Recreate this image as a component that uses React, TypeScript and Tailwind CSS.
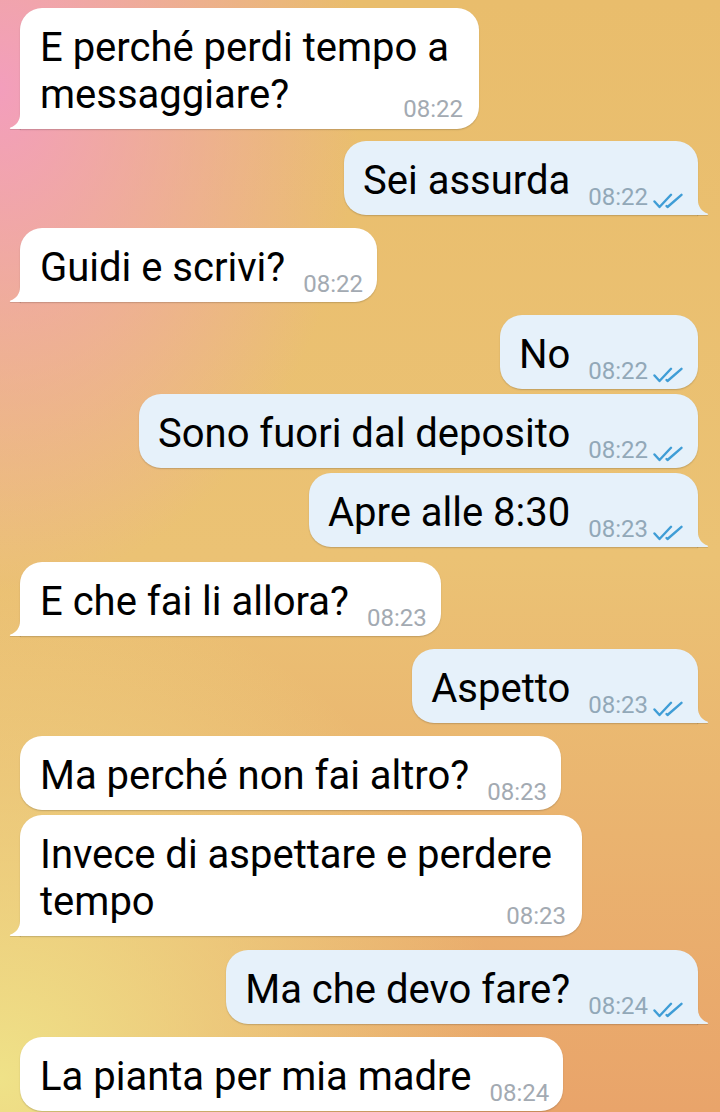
import React from "react";

type Msg = {
  out: boolean;
  lines: string[];
  time: string;
  tail: boolean;
  gap: string;
};

const msgs: Msg[] = [
  { out: false, lines: ["E perché perdi tempo a", "messaggiare?"], time: "08:22", tail: true, gap: "mt-0" },
  { out: true, lines: ["Sei assurda"], time: "08:22", tail: true, gap: "mt-[12px]" },
  { out: false, lines: ["Guidi e scrivi?"], time: "08:22", tail: true, gap: "mt-[13px]" },
  { out: true, lines: ["No"], time: "08:22", tail: false, gap: "mt-[13px]" },
  { out: true, lines: ["Sono fuori dal deposito"], time: "08:22", tail: false, gap: "mt-[5px]" },
  { out: true, lines: ["Apre alle 8:30"], time: "08:23", tail: true, gap: "mt-[5px]" },
  { out: false, lines: ["E che fai li allora?"], time: "08:23", tail: true, gap: "mt-[15px]" },
  { out: true, lines: ["Aspetto"], time: "08:23", tail: true, gap: "mt-[13px]" },
  { out: false, lines: ["Ma perché non fai altro?"], time: "08:23", tail: false, gap: "mt-[13px]" },
  { out: false, lines: ["Invece di aspettare e perdere", "tempo"], time: "08:23", tail: true, gap: "mt-[5px]" },
  { out: true, lines: ["Ma che devo fare?"], time: "08:24", tail: true, gap: "mt-[14px]" },
  { out: false, lines: ["La pianta per mia madre"], time: "08:24", tail: false, gap: "mt-[13px]" },
];

function Checks() {
  return (
    <svg width="31" height="16" viewBox="0 0 31 16" className="shrink-0 ml-[5px] translate-y-[5px]" fill="none">
      <path d="M1.5 8.5 L6.5 14 L18 1.8" stroke="#3f9dd6" strokeWidth="2.4" strokeLinecap="round" strokeLinejoin="round" />
      <path d="M13.5 13 L14.5 14 L28.5 1.8" stroke="#3f9dd6" strokeWidth="2.4" strokeLinecap="round" strokeLinejoin="round" />
    </svg>
  );
}

function Tail({ out }: { out: boolean }) {
  if (out) {
    return (
      <svg
        width="12"
        height="15"
        viewBox="0 0 12 15"
        className="absolute right-[-11px] bottom-0 drop-shadow-[0_1px_0.5px_rgba(0,0,0,0.12)]"
      >
        <path d="M0 0 L1 0 C1 7 5 11.5 10.5 13.6 Q12 14.4 10.5 15 L0 15 Z" fill="#e6f1fa" />
      </svg>
    );
  }
  return (
    <svg
      width="12"
      height="15"
      viewBox="0 0 12 15"
      className="absolute left-[-11px] bottom-0 drop-shadow-[0_1px_0.5px_rgba(0,0,0,0.12)]"
    >
      <path d="M12 0 L11 0 C11 7 7 11.5 1.5 13.6 Q0 14.4 1.5 15 L12 15 Z" fill="#ffffff" />
    </svg>
  );
}

function Bubble({ m }: { m: Msg }) {
  const bg = m.out ? "bg-[#e6f1fa]" : "bg-white";
  const timeColor = m.out ? "text-[#92a8b8]" : "text-[#a3aab2]";
  const corner = m.tail ? (m.out ? "rounded-br-none" : "rounded-bl-none") : "";
  const align = m.out ? "self-end" : "self-start";
  const multi = m.lines.length > 1;

  const pad = multi
    ? "pl-[20px] pr-[16px]"
    : m.out
    ? "pl-[19px] pr-[14px]"
    : "pl-[20px] pr-[14px]";

  return (
    <div
      className={`relative ${align} ${m.gap} ${bg} ${corner} rounded-[22px] shadow-[0_1px_1.5px_rgba(0,0,0,0.18)] ${pad} pt-[16px] pb-[11px]`}
    >
      {multi ? (
        <div className="grid">
          <div className="col-start-1 row-start-1 text-[40px] leading-[47px] text-black pr-[14px]">
            {m.lines.map((l, i) => (
              <div key={i}>{l}</div>
            ))}
          </div>
          <div className="col-start-1 row-start-1 self-end justify-self-end flex items-end translate-y-[3px]">
            <span className={`text-[24px] leading-[24px] ${timeColor}`}>{m.time}</span>
            {m.out && <Checks />}
          </div>
        </div>
      ) : (
        <div className="flex items-end">
          <span className="text-[40px] leading-[47px] text-black whitespace-nowrap">{m.lines[0]}</span>
          <span className={`ml-[18px] text-[24px] leading-[24px] translate-y-[5px] whitespace-nowrap ${timeColor}`}>
            {m.time}
          </span>
          {m.out && <Checks />}
        </div>
      )}
      {m.tail && <Tail out={m.out} />}
    </div>
  );
}

export default function App() {
  return (
    <div className="w-[720px] h-[1112px] overflow-hidden font-['Roboto',sans-serif] bg-[radial-gradient(ellipse_50%_45%_at_0%_8%,rgba(243,158,188,1)_0%,rgba(243,158,188,0.55)_45%,rgba(243,158,188,0)_100%),radial-gradient(ellipse_70%_45%_at_0%_97%,rgba(239,226,136,1)_0%,rgba(239,226,136,0)_100%),linear-gradient(180deg,#e9bd6c_0%,#ebc274_50%,#e9a46a_100%)]">
      <div className="flex flex-col pt-[8px] pl-[20px] pr-[22px]">
        {msgs.map((m, i) => (
          <Bubble key={i} m={m} />
        ))}
      </div>
    </div>
  );
}
